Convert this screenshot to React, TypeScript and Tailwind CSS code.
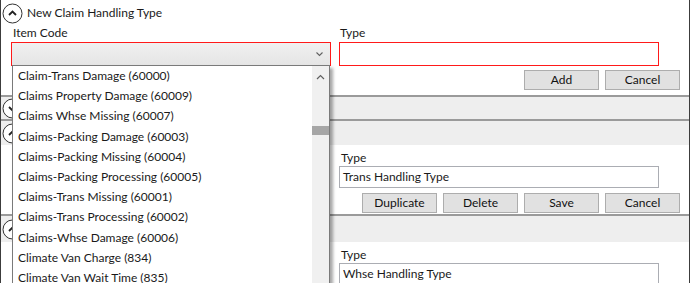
const items = [
    "Claim-Trans Damage (60000)",
    "Claims Property Damage (60009)",
    "Claims Whse Missing (60007)",
    "Claims-Packing Damage (60003)",
    "Claims-Packing Missing (60004)",
    "Claims-Packing Processing (60005)",
    "Claims-Trans Missing (60001)",
    "Claims-Trans Processing (60002)",
    "Claims-Whse Damage (60006)",
    "Climate Van Charge (834)",
    "Climate Van Wait Time (835)",
];

const ToggleIcon = ({ up }: { up: boolean }) => (
    <svg width="21" height="21" viewBox="0 0 21 21" className="shrink-0">
        <circle cx="10.5" cy="10.5" r="9.5" fill="white" stroke="#333" strokeWidth="1" />
        {up ? (
            <polyline points="7,12 10.5,8.5 14,12" fill="none" stroke="#222" strokeWidth="1.8" />
        ) : (
            <polyline points="7,9 10.5,12.5 14,9" fill="none" stroke="#222" strokeWidth="1.8" />
        )}
    </svg>
);

const Btn = ({ label }: { label: string }) => (
    <button className="w-[75px] h-[20px] bg-[#e1e1e1] border border-[#adadad] text-[12px] leading-none text-[#111]">
        {label}
    </button>
);

const Chevron = ({ up }: { up?: boolean }) => (
    <svg width="9" height="6" viewBox="0 0 9 6">
        {up ? (
            <polyline points="1,5 4.5,1.5 8,5" fill="none" stroke="#606060" strokeWidth="1.2" />
        ) : (
            <polyline points="1.5,1.5 4.5,4.5 7.5,1.5" fill="none" stroke="#606060" strokeWidth="1.1" />
        )}
    </svg>
);

const TypeField = ({ value }: { value: string }) => (
    <div className="flex flex-col ml-[338px] w-[320px] mt-[2px]">
        <span className="text-[12px] leading-[16px] pl-[2px] h-[19px] pt-[3px]">Type</span>
        <div className="h-[22px] border border-[#abadb3] bg-white text-[12px] leading-[20px] pl-[3px]">
            {value}
        </div>
    </div>
);

export default function App() {
    return (
        <div className="relative w-[692px] h-[283px] overflow-hidden bg-white text-[#1a1a1a] font-['Lato','Liberation_Sans',Arial,sans-serif]">
            <div className="w-[690px] border-l border-r border-[#3c3c3c]">
                {/* new claim handling type */}
                <div className="h-[97px] border-b-2 border-[#9a9a9a] flex flex-col">
                    <div className="h-[25px] flex items-center gap-[4px] pl-[1px] pt-[1px]">
                        <ToggleIcon up />
                        <span className="text-[12px]">New Claim Handling Type</span>
                    </div>
                    <div className="flex pl-[10px] gap-[8px]">
                        <div className="flex flex-col w-[320px]">
                            <span className="text-[12px] leading-[16px] pl-[2px] h-[17px]">Item Code</span>
                            <div className="h-[24px] border border-[#ff1a1a] bg-gradient-to-b from-[#f0f0f0] to-[#e5e5e5] flex items-center justify-end pr-[6px]">
                                <Chevron />
                            </div>
                        </div>
                        <div className="flex flex-col w-[320px]">
                            <span className="text-[12px] leading-[16px] pl-[1px] h-[17px]">Type</span>
                            <div className="h-[24px] border border-[#ff1a1a] bg-white" />
                        </div>
                    </div>
                    <div className="flex justify-end gap-[6px] pr-[9px] mt-[4px]">
                        <Btn label="Add" />
                        <Btn label="Cancel" />
                    </div>
                </div>

                {/* collapsed */}
                <div className="h-[24px] bg-[#eeeeee] border-b-2 border-[#9a9a9a] flex items-center pl-[1px]">
                    <ToggleIcon up={false} />
                </div>

                {/* trans handling type */}
                <div className="h-[95px] border-b-2 border-[#9a9a9a] flex flex-col">
                    <div className="h-[24px] bg-[#eeeeee] flex items-center pl-[1px]">
                        <ToggleIcon up />
                    </div>
                    <TypeField value="Trans Handling Type" />
                    <div className="flex justify-end gap-[6px] pr-[9px] mt-[5px]">
                        <Btn label="Duplicate" />
                        <Btn label="Delete" />
                        <Btn label="Save" />
                        <Btn label="Cancel" />
                    </div>
                </div>

                {/* whse handling type */}
                <div className="flex flex-col">
                    <div className="h-[26px] bg-[#eeeeee] flex items-center pl-[1px]">
                        <ToggleIcon up />
                    </div>
                    <TypeField value="Whse Handling Type" />
                </div>
            </div>

            {/* dropdown list */}
            <div className="absolute left-[12px] top-[65px] w-[318px] h-[240px] bg-white border border-[#7a7a7a] shadow-[3px_3px_3px_rgba(0,0,0,0.35)] flex">
                <div className="flex-1 flex flex-col">
                    {items.map((it) => (
                        <div key={it} className="h-[20.2px] flex items-center pl-[5px] text-[12px] whitespace-nowrap">
                            {it}
                        </div>
                    ))}
                </div>
                <div className="w-[17px] bg-[#f0f0f0] flex flex-col items-center">
                    <div className="h-[17px] flex items-center justify-center mt-[2px]">
                        <Chevron up />
                    </div>
                    <div className="w-[17px] h-[9px] bg-[#a6a6a6] mt-[41px]" />
                </div>
            </div>
        </div>
    );
}
